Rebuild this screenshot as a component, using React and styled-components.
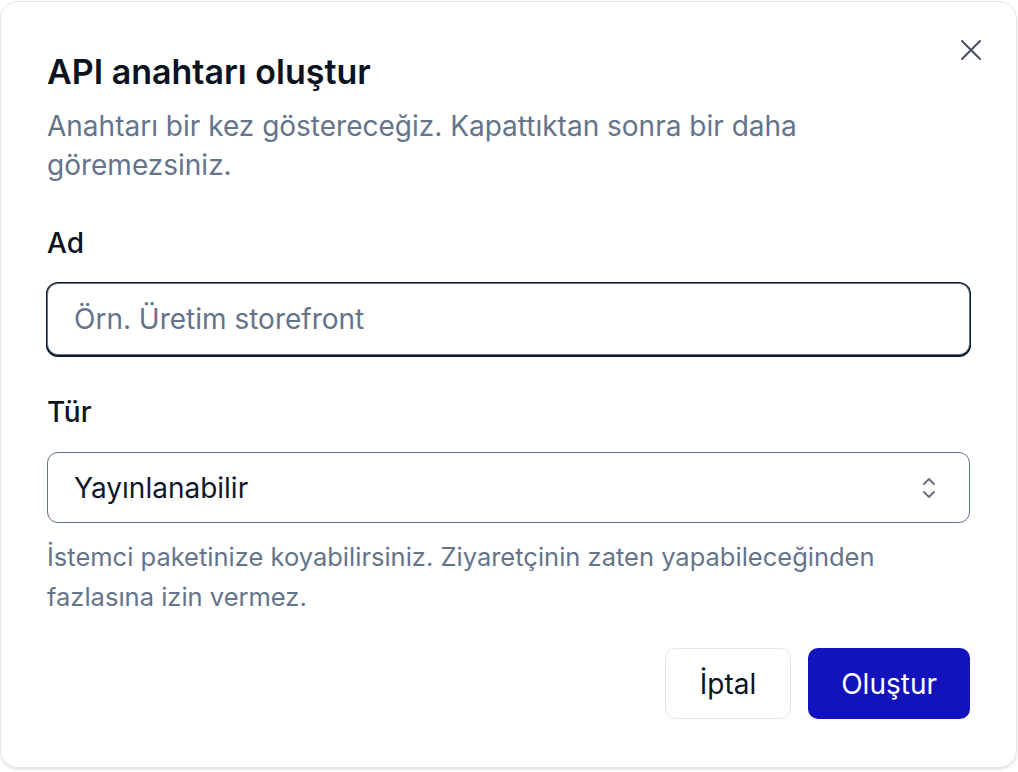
import React from "react";
import styled, { createGlobalStyle } from "styled-components";

const Global = createGlobalStyle`
  html, body { margin: 0; padding: 0; background: #ffffff; }
  body { font-family: Inter, "Noto Sans", sans-serif; color: #0f172a; }
  * { box-sizing: border-box; }
`;

const Page = styled.div`
  width: 1018px;
  height: 772px;
  padding: 1px 1px 0 0;
  overflow: hidden;
`;

const Dialog = styled.div`
  position: relative;
  width: 1017px;
  background: #fff;
  border: 1px solid #e2e8f0;
  border-radius: 18px;
  box-shadow: 0 2px 3px rgba(15, 23, 42, 0.1);
  padding: 49px 46px 48px 46px;
  display: flex;
  flex-direction: column;
`;

const CloseButton = styled.button`
  position: absolute;
  top: 35px;
  right: 32px;
  width: 26px;
  height: 26px;
  padding: 0;
  border: none;
  background: transparent;
  color: #4b5060;
  display: flex;
  align-items: center;
  justify-content: center;
  cursor: pointer;
`;

const Title = styled.h2`
  margin: 0;
  font-size: 34px;
  line-height: 42px;
  font-weight: 600;
  color: #0b1220;
`;

const Description = styled.p`
  margin: 14px 0 0 0;
  font-size: 28px;
  line-height: 39px;
  color: #64748b;
`;

const Field = styled.div`
  display: flex;
  flex-direction: column;
  margin-top: ${(p) => p.$top}px;
`;

const Label = styled.label`
  font-size: 28px;
  line-height: 40px;
  font-weight: 500;
  color: #0b1220;
  margin-bottom: 20px;
`;

const Input = styled.input`
  width: 100%;
  height: 72px;
  border: 1px solid #64748b;
  border-radius: 11px;
  box-shadow: 0 0 0 1px #111827, 0 1px 0 1px #111827;
  padding: 0 26px;
  font-family: Inter, "Noto Sans", sans-serif;
  font-size: 28px;
  color: #0f172a;
  outline: none;
  &::placeholder { color: #64748b; }
`;

const SelectBox = styled.div`
  width: 100%;
  height: 71px;
  border: 1.5px solid #64748b;
  border-radius: 11px;
  padding: 0 33px 0 26px;
  display: flex;
  align-items: center;
  justify-content: space-between;
  font-size: 28px;
  color: #0f172a;
`;

const Helper = styled.p`
  margin: 14px 0 0 0;
  font-size: 25.5px;
  line-height: 40px;
  color: #64748b;
`;

const Footer = styled.div`
  display: flex;
  justify-content: flex-end;
  gap: 17px;
  margin-top: 31px;
`;

const Button = styled.button`
  height: 71px;
  padding: 0 ${(p) => (p.$primary ? 33 : 34)}px;
  border-radius: 10px;
  font-family: Inter, "Noto Sans", sans-serif;
  font-size: 28px;
  font-weight: 400;
  border: ${(p) => (p.$primary ? "none" : "1.5px solid #e2e8f0")};
  background: ${(p) => (p.$primary ? "#1313bd" : "#ffffff")};
  color: ${(p) => (p.$primary ? "#ffffff" : "#0b1220")};
  cursor: pointer;
`;

export default function App() {
  return (
    <>
      <Global />
      <Page>
        <Dialog role="dialog">
          <CloseButton aria-label="Kapat">
            <svg width="22" height="22" viewBox="0 0 22 22" fill="none" stroke="currentColor" strokeWidth="2" strokeLinecap="round">
              <path d="M2 2L20 20M20 2L2 20" />
            </svg>
          </CloseButton>
          <Title>API anahtarı oluştur</Title>
          <Description>
            Anahtarı bir kez göstereceğiz. Kapattıktan sonra bir daha
            <br />
            göremezsiniz.
          </Description>
          <Field $top={38}>
            <Label>Ad</Label>
            <Input placeholder="Örn. Üretim storefront" />
          </Field>
          <Field $top={37}>
            <Label>Tür</Label>
            <SelectBox>
              <span>Yayınlanabilir</span>
              <svg width="14" height="22" viewBox="0 0 14 22" fill="none" stroke="#6b7280" strokeWidth="2" strokeLinecap="round" strokeLinejoin="round">
                <path d="M2 7L7 2L12 7M2 15L7 20L12 15" />
              </svg>
            </SelectBox>
          </Field>
          <Helper>
            İstemci paketinize koyabilirsiniz. Ziyaretçinin zaten yapabileceğinden
            <br />
            fazlasına izin vermez.
          </Helper>
          <Footer>
            <Button>İptal</Button>
            <Button $primary>Oluştur</Button>
          </Footer>
        </Dialog>
      </Page>
    </>
  );
}
